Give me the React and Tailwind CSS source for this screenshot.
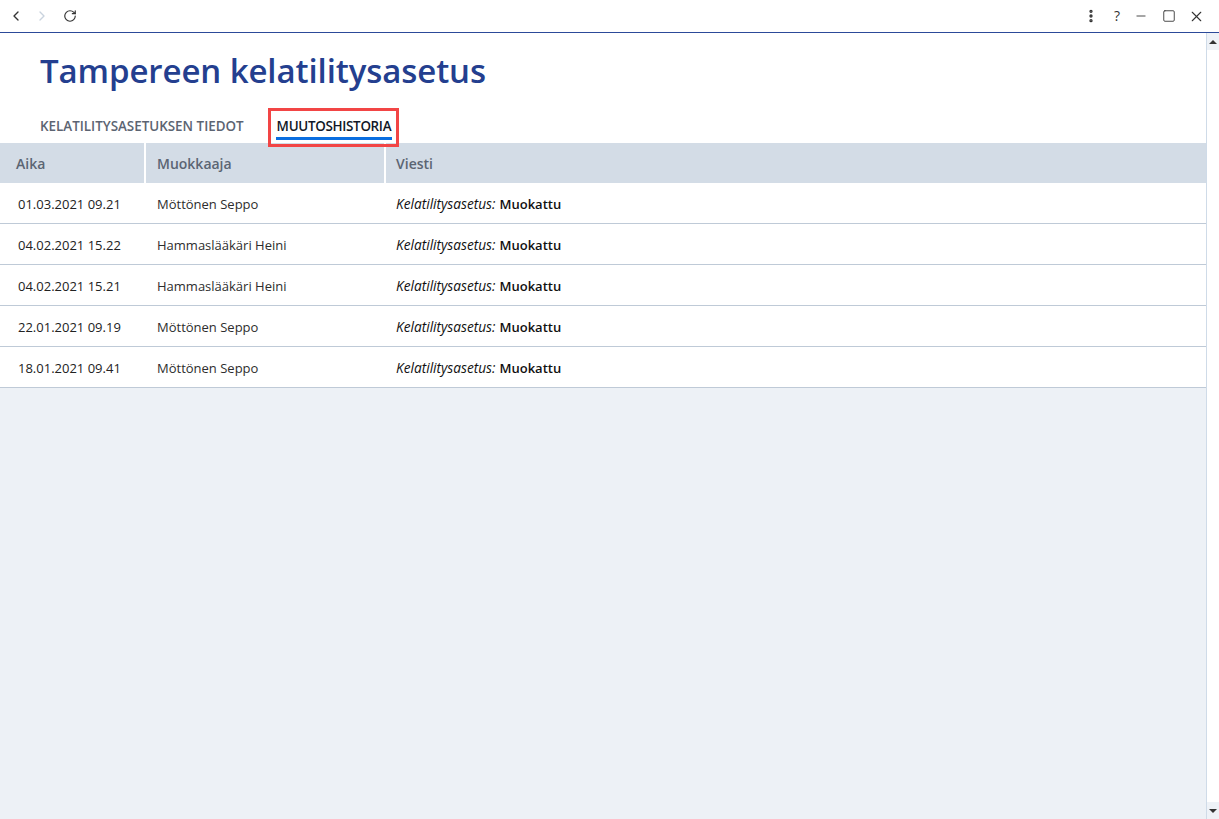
import { ChevronLeft, ChevronRight, RotateCw, EllipsisVertical, Minus, Square, X } from "lucide-react";

const rows = [
  { time: "01.03.2021 09.21", editor: "Möttönen Seppo" },
  { time: "04.02.2021 15.22", editor: "Hammaslääkäri Heini" },
  { time: "04.02.2021 15.21", editor: "Hammaslääkäri Heini" },
  { time: "22.01.2021 09.19", editor: "Möttönen Seppo" },
  { time: "18.01.2021 09.41", editor: "Möttönen Seppo" },
];

const TitleBar = () => (
  <div className="h-[33px] flex items-center justify-between border-b border-[#2c4a99] bg-white text-[#333]">
    <div className="flex items-center">
      <ChevronLeft className="ml-[8px] w-[16px] h-[16px]" strokeWidth={2} />
      <ChevronRight className="ml-[10px] w-[16px] h-[16px] text-[#c9d3de]" strokeWidth={2} />
      <RotateCw className="ml-[13px] w-[14px] h-[14px]" strokeWidth={2} />
    </div>
    <div className="flex items-center">
      <EllipsisVertical className="w-[16px] h-[16px]" strokeWidth={3} />
      <span className="ml-[15px] text-[14px] leading-none">?</span>
      <Minus className="ml-[14px] w-[14px] h-[14px]" strokeWidth={1.5} />
      <Square className="ml-[14px] w-[14px] h-[14px]" strokeWidth={1.5} />
      <X className="ml-[12px] mr-[14px] w-[17px] h-[17px]" strokeWidth={1.5} />
    </div>
  </div>
);

const Scrollbar = () => (
  <div className="w-[13px] border-l border-[#cfdbe8] bg-white flex flex-col justify-between">
    <div className="h-[17px] bg-[#eef2f7] flex items-center justify-center">
      <div className="w-0 h-0 border-l-[4px] border-r-[4px] border-b-[4px] border-l-transparent border-r-transparent border-b-[#333]" />
    </div>
    <div className="h-[17px] bg-[#eef2f7] flex items-center justify-center">
      <div className="w-0 h-0 border-l-[4px] border-r-[4px] border-t-[4px] border-l-transparent border-r-transparent border-t-[#333]" />
    </div>
  </div>
);

export default function App() {
  return (
    <div
      className="w-[1219px] h-[819px] flex flex-col overflow-hidden bg-white"
      style={{ fontFamily: '"Open Sans", "Noto Sans", sans-serif' }}
    >
      <TitleBar />
      <div className="flex-1 flex min-h-0">
        <div className="flex-1 flex flex-col bg-[#edf1f6]">
          <div className="bg-white px-[40px] pt-[14px]">
            <h1 className="text-[33px] leading-[48px] font-semibold text-[#243f8f] tracking-[-0.1px]">
              Tampereen kelatilitysasetus
            </h1>
            <div className="flex items-stretch mt-[9px] h-[39px] text-[13.4px] font-semibold">
              <div className="flex items-center pt-[5px] text-[#5c6472]">KELATILITYSASETUKSEN TIEDOT</div>
              <div className="relative ml-[33px] flex items-center pt-[5px] text-[#111827]">
                <span className="tracking-[-0.3px]">MUUTOSHISTORIA</span>
                <div className="absolute -left-[1px] -right-[1px] bottom-[3px] h-[3px] bg-[#0a6ee0]" />
                <div className="absolute -left-[9px] -right-[8px] top-[4px] bottom-[-4px] border-[3px] border-[#f24545]" />
              </div>
            </div>
          </div>
          <div className="flex h-[40px] bg-[#d3dce6] text-[14px] font-semibold text-[#5b6573]">
            <div className="w-[144px] flex items-center pl-[16px]">Aika</div>
            <div className="w-[240px] flex items-center pl-[11px] border-l-2 border-white">Muokkaaja</div>
            <div className="flex-1 flex items-center pl-[10px] border-l-2 border-white">Viesti</div>
          </div>
          {rows.map((r, i) => (
            <div key={i} className="flex h-[41px] bg-white border-b border-[#bfcad7] text-[13px] text-[#222]">
              <div className="w-[144px] flex items-center pt-[3px] pl-[18px]">{r.time}</div>
              <div className="w-[240px] flex items-center pt-[3px] pl-[13px] text-[#2d2d2d]">{r.editor}</div>
              <div className="flex-1 flex items-center pt-[3px] pl-[12px] text-[#111]">
                <i className="mr-[4px] text-[13.7px]">Kelatilitysasetus:</i>
                <span className="font-semibold">Muokattu</span>
              </div>
            </div>
          ))}
        </div>
        <Scrollbar />
      </div>
    </div>
  );
}
